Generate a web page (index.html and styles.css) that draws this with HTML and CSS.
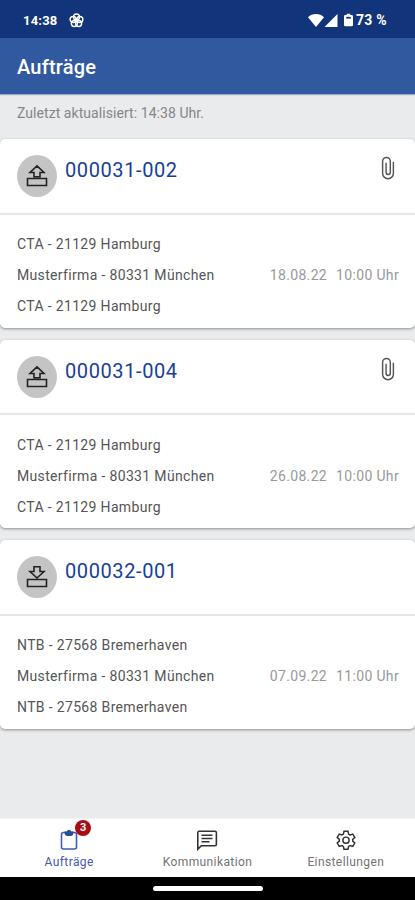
FILE: index.html
```html
<!DOCTYPE html>
<html lang="de">
<head>
<meta charset="utf-8">
<meta name="viewport" content="width=device-width, initial-scale=1">
<title>Aufträge</title>
<link rel="stylesheet" href="styles.css">
</head>
<body>
<svg class="defs" width="0" height="0" aria-hidden="true">
  <symbol id="export" viewBox="0 0 24 24"><path d="M2.5 14.5h19v7h-19zM12 1.8l-7 6.7h4v4.2h6V8.5h4z"/></symbol>
  <symbol id="import" viewBox="0 0 24 24"><path d="M2.5 14.5h19v7h-19zM9 1.8h6V6.5h4L12 13 5 6.5h4z"/></symbol>
  <symbol id="clip" viewBox="0 0 14 26"><path d="M12.6 6v12a5.600 5.600 0 0 1-11.200 0V5.500a4 4 0 0 1 8 0V17a2.200 2.200 0 0 1-4.400 0V7"/></symbol>
</svg>
<div class="app">
  <div class="status">
    <span class="clock">14:38</span>
    <svg class="pinwheel" viewBox="0 0 16 16"><circle cx="8" cy="4.300" r="3.200"/><circle cx="11.600" cy="6.900" r="3.200"/><circle cx="10.300" cy="11.200" r="3.200"/><circle cx="5.700" cy="11.200" r="3.200"/><circle cx="4.400" cy="6.900" r="3.200"/></svg>
    <svg class="wifi" viewBox="0 0 16 13"><path d="M0 3.300Q3.400 0 8 0t8 3.300L8 13z"/></svg>
    <svg class="signal" viewBox="0 0 14 14"><path d="M14 0v14H0z"/></svg>
    <svg class="battery" viewBox="0 0 10 14"><path d="M3 0h4v1.500h1.500Q10 1.500 10 3v9.500Q10 14 8.500 14h-7Q0 14 0 12.500V3q0-1.500 1.500-1.500H3z"/><path class="level" d="M2.500 3.500h5v2h-5z"/></svg>
    <span class="percent">73 %</span>
  </div>
  <header class="header"><h1>Aufträge</h1></header>
  <main class="content">
    <p class="updated">Zuletzt aktualisiert: 14:38 Uhr.</p>
    <article class="card">
      <div class="card-head">
        <span class="avatar"><svg><use href="#export"/></svg></span>
        <h2>000031-002</h2>
        <svg class="clip"><use href="#clip"/></svg>
      </div>
      <div class="card-body">
        <div class="row">CTA - 21129 Hamburg</div>
        <div class="row">Musterfirma - 80331 München<span class="date"><span>18.08.22</span><span>10:00 Uhr</span></span></div>
        <div class="row">CTA - 21129 Hamburg</div>
      </div>
    </article>
    <article class="card">
      <div class="card-head">
        <span class="avatar"><svg><use href="#export"/></svg></span>
        <h2>000031-004</h2>
        <svg class="clip"><use href="#clip"/></svg>
      </div>
      <div class="card-body">
        <div class="row">CTA - 21129 Hamburg</div>
        <div class="row">Musterfirma - 80331 München<span class="date"><span>26.08.22</span><span>10:00 Uhr</span></span></div>
        <div class="row">CTA - 21129 Hamburg</div>
      </div>
    </article>
    <article class="card">
      <div class="card-head">
        <span class="avatar"><svg><use href="#import"/></svg></span>
        <h2>000032-001</h2>
      </div>
      <div class="card-body">
        <div class="row">NTB - 27568 Bremerhaven</div>
        <div class="row">Musterfirma - 80331 München<span class="date"><span>07.09.22</span><span>11:00 Uhr</span></span></div>
        <div class="row">NTB - 27568 Bremerhaven</div>
      </div>
    </article>
  </main>
  <nav class="tabs">
    <div class="tab active">
      <span class="icon"><svg viewBox="0 0 22 22"><path d="M5.500 3.500h11q2 0 2 2v12.500q0 2-2 2h-11q-2 0-2-2V5.500q0-2 2-2z"/><path class="fill" d="M6.500 2.500h2.300a2.300 2.300 0 0 1 4.400 0h2.300q0 4.500-3 4.500h-3q-3 0-3-4.500z"/></svg><span class="badge">3</span></span>
      <span>Aufträge</span>
    </div>
    <div class="tab">
      <span class="icon"><svg viewBox="0 0 22 22"><path d="M3 2.300h16q1.400 0 1.400 1.400v11.600q0 1.400-1.400 1.400H5.300l-3.500 3.500V3.700Q1.800 2.300 3 2.300zM5.500 6.200h11M5.500 9.500h11M5.500 12.800h8"/></svg></span>
      <span>Kommunikation</span>
    </div>
    <div class="tab">
      <span class="icon"><svg viewBox="0 0 24 24"><path d="M9.800 2.500h4.400l.6 3 1.700 1 2.900-1 2.200 3.800-2.300 2v1.900l2.300 2-2.200 3.800-2.900-1-1.700 1-.6 3H9.800l-.6-3-1.700-1-2.900 1-2.200-3.800 2.300-2v-1.900l-2.300-2 2.200-3.800 2.900 1 1.700-1z"/><circle cx="12" cy="12.250" r="3.400"/></svg></span>
      <span>Einstellungen</span>
    </div>
  </nav>
  <div class="system"><span class="handle"></span></div>
</div>
</body>
</html>
```
FILE: styles.css
```css
* { box-sizing: border-box; }
body, h1, h2, p { margin: 0; }
body { font-family: Roboto, "Liberation Sans", sans-serif; }
svg { display: block; fill: none; stroke: #222; }
.defs { position: absolute; }
.app { display: flex; flex-direction: column; width: 415px; height: 900px; overflow: hidden; background: #e9ebec; }

.status { display: flex; align-items: center; flex: none; height: 38px; padding: 2px 28px 0 23px; background: #12347a; color: #fff; font-size: 13px; font-weight: 700; }
.status svg { fill: #fff; stroke: none; }
.clock { width: 46px; letter-spacing: .2px; }
.status .pinwheel { width: 15px; height: 15px; fill: none; stroke: #fff; stroke-width: 1.5; }
.wifi { width: 16px; height: 13px; margin-left: auto; }
.signal { width: 14px; height: 13px; }
.battery { width: 9px; height: 14px; margin: 0 3px 0 6px; }
.status .level { fill: #12347a; }
.percent { width: 31px; font-size: 14px; letter-spacing: .2px; white-space: nowrap; }

.header { display: flex; align-items: center; flex: none; height: 56px; padding: 2px 17px 0; background: #3059a0; color: #fff; box-shadow: 0 1px 1px #9aabc8; }
.header h1 { font-size: 20px; font-weight: 500; line-height: 24px; letter-spacing: .2px; }

.content { display: flex; flex-direction: column; flex: 1; gap: 12px; min-height: 0; }
.updated { height: 33px; padding: 9px 17px 0; font-size: 14px; line-height: 20px; letter-spacing: .06px; color: #858788; }
.card { flex: none; height: 188.5px; border-radius: 5px; background: #fff; box-shadow: 0 1px 3px rgba(0, 0, 0, .4); }
.card-head { display: flex; height: 75.5px; padding: 16px 20px 0 17px; border-bottom: 2px solid #e4e5e6; }
.avatar { display: flex; align-items: center; justify-content: center; width: 40px; height: 42px; border-radius: 50%; background: #c4c4c4; }
.avatar svg { width: 24px; height: 24px; stroke-width: 1.6; }
.card h2 { margin-left: 8px; font-size: 20px; font-weight: 400; line-height: 31px; letter-spacing: .6px; color: #17409a; }
.clip { width: 14px; height: 25px; margin: 1px 0 0 auto; stroke: #555; stroke-width: 1.5; }
.card-body { padding: 14.5px 16px 0 17px; }
.row { display: flex; justify-content: space-between; height: 31.2px; font-size: 14px; line-height: 31px; letter-spacing: .34px; color: #555; }
.date { display: flex; gap: 9px; color: #999; }

.tabs { display: flex; flex: none; height: 58px; background: #fff; box-shadow: 0 -1px 1px #f2f2f3; }
.tab { display: flex; flex: 1; flex-direction: column; align-items: center; padding-top: 10px; font-size: 12px; line-height: 16px; letter-spacing: .4px; color: #737373; }
.icon { position: relative; margin-bottom: 3px; }
.icon svg { width: 22px; height: 22px; stroke: #333; stroke-width: 1.6; }
.active { color: #4359ae; }
.active .icon svg { stroke: #3f5eb0; }
.active .icon .fill { fill: #244b9c; stroke: none; }
.badge { position: absolute; top: -9px; left: 17px; width: 16px; height: 16px; border-radius: 50%; background: #a80d14; color: #fff; font-size: 11px; font-weight: 700; line-height: 16px; letter-spacing: 0; text-align: center; }
.system { display: flex; justify-content: center; flex: none; height: 23px; padding-top: 9px; background: #000; }
.handle { width: 110px; height: 5px; border-radius: 3px; background: #fff; }
```
